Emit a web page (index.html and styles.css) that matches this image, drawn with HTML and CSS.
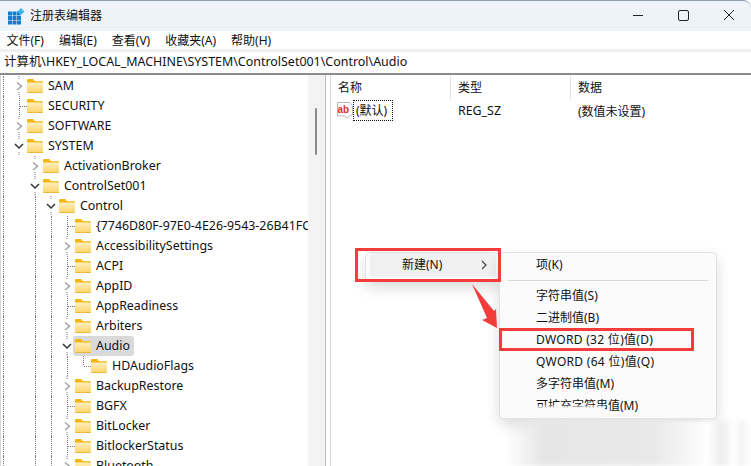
FILE: index.html
```html
<!DOCTYPE html>
<html lang="zh-CN">
<head>
<meta charset="utf-8">
<title>注册表编辑器</title>
<link rel="stylesheet" href="styles.css">
</head>
<body>
<svg class="defs" width="0" height="0" aria-hidden="true">
  <defs>
    <linearGradient id="fg" x1="0" y1="0" x2="0" y2="1"><stop offset="0" stop-color="#fff0bd"/><stop offset="1" stop-color="#fdd264"/></linearGradient>
    <symbol id="folder" viewBox="0 0 16 14">
      <path d="M0 1.5C0 .7.5 0 1.2 0H6l2 2.2h7c.6 0 1 .4 1 1V4H0z" fill="#f5b50d"/>
      <path d="M0 3.6h16v9.4c0 .6-.4 1-1 1H1c-.6 0-1-.4-1-1z" fill="url(#fg)"/>
      <path d="M0 13h16v.2c0 .5-.4.8-1 .8H1c-.6 0-1-.3-1-.8z" fill="#e9b743"/>
    </symbol>
    <symbol id="right" viewBox="0 0 16 20">
      <path d="M8 0v4M8 16v4" stroke="#777" stroke-dasharray="1 1" fill="none"/>
      <path d="M6 6.500l4.500 3.700L6 14" stroke="#a3a3a3" stroke-width="1.500" fill="none"/>
    </symbol>
    <symbol id="down" viewBox="0 0 16 20">
      <path d="M8 0v4M8 16v4" stroke="#777" stroke-dasharray="1 1" fill="none"/>
      <path d="M4 8l4 4 4-4" stroke="#333" stroke-width="1.500" fill="none"/>
    </symbol>
    <symbol id="leaf" viewBox="0 0 16 20">
      <path d="M8.500 0v20M9 10.500h7" stroke="#777" stroke-dasharray="1 1" fill="none"/>
    </symbol>
    <symbol id="last" viewBox="0 0 16 20">
      <path d="M8.500 0v10M9 10.500h7" stroke="#777" stroke-dasharray="1 1" fill="none"/>
    </symbol>
  </defs>
</svg>
<div class="window">
  <header class="titlebar">
    <svg class="appicon" width="17" height="17" viewBox="0 0 17 17">
      <path d="M0 3.500h4v4H0zM4.500 3.500h4v4h-4zM9 3.500h3.500v4H9zM0 8h4v4H0zM4.500 8h4v4h-4zM9 8h4v4H9zM0 12.500h4v4H0zM4.500 12.500h4v4h-4zM9 12.500h4v4H9z" fill="#0f7fd0"/>
      <path d="M13 0l3.500 3.500L13 7 9.500 3.500z" fill="#3fb6ea"/>
    </svg>
    <span class="title">注册表编辑器</span>
    <div class="controls">
      <svg width="12" height="12" viewBox="0 0 12 12"><path d="M0 5.500h10" stroke="#222" fill="none"/></svg>
      <svg width="12" height="12" viewBox="0 0 12 12"><rect x=".5" y=".5" width="10" height="10" rx="1.500" stroke="#222" fill="none"/></svg>
      <svg width="12" height="12" viewBox="0 0 12 12"><path d="M1 0l10 10M11 0L1 10" stroke="#222" fill="none"/></svg>
    </div>
  </header>
  <nav class="menubar">
    <span>文件(F)</span><span>编辑(E)</span><span>查看(V)</span><span>收藏夹(A)</span><span>帮助(H)</span>
  </nav>
  <div class="address">计算机\HKEY_LOCAL_MACHINE\SYSTEM\ControlSet001\Control\Audio</div>
  <main class="panes">
    <section class="tree">
      <div class="tree-scroll">
        <div class="row"><i class="g"></i><svg class="ex"><use href="#right"/></svg><svg class="fo"><use href="#folder"/></svg><span>SAM</span></div>
        <div class="row"><i class="g"></i><svg class="ex"><use href="#leaf"/></svg><svg class="fo"><use href="#folder"/></svg><span>SECURITY</span></div>
        <div class="row"><i class="g"></i><svg class="ex"><use href="#right"/></svg><svg class="fo"><use href="#folder"/></svg><span>SOFTWARE</span></div>
        <div class="row"><i class="g"></i><svg class="ex"><use href="#down"/></svg><svg class="fo"><use href="#folder"/></svg><span>SYSTEM</span></div>
        <div class="row"><i class="g"></i><i class="b"></i><svg class="ex"><use href="#right"/></svg><svg class="fo"><use href="#folder"/></svg><span>ActivationBroker</span></div>
        <div class="row"><i class="g"></i><i class="b"></i><svg class="ex"><use href="#down"/></svg><svg class="fo"><use href="#folder"/></svg><span>ControlSet001</span></div>
        <div class="row"><i class="g"></i><i class="b"></i><i class="g"></i><svg class="ex"><use href="#down"/></svg><svg class="fo"><use href="#folder"/></svg><span>Control</span></div>
        <div class="row"><i class="g"></i><i class="b"></i><i class="g"></i><i class="g"></i><svg class="ex"><use href="#leaf"/></svg><svg class="fo"><use href="#folder"/></svg><span>{7746D80F-97E0-4E26-9543-26B41FC22F79}</span></div>
        <div class="row"><i class="g"></i><i class="b"></i><i class="g"></i><i class="g"></i><svg class="ex"><use href="#right"/></svg><svg class="fo"><use href="#folder"/></svg><span>AccessibilitySettings</span></div>
        <div class="row"><i class="g"></i><i class="b"></i><i class="g"></i><i class="g"></i><svg class="ex"><use href="#leaf"/></svg><svg class="fo"><use href="#folder"/></svg><span>ACPI</span></div>
        <div class="row"><i class="g"></i><i class="b"></i><i class="g"></i><i class="g"></i><svg class="ex"><use href="#right"/></svg><svg class="fo"><use href="#folder"/></svg><span>AppID</span></div>
        <div class="row"><i class="g"></i><i class="b"></i><i class="g"></i><i class="g"></i><svg class="ex"><use href="#leaf"/></svg><svg class="fo"><use href="#folder"/></svg><span>AppReadiness</span></div>
        <div class="row"><i class="g"></i><i class="b"></i><i class="g"></i><i class="g"></i><svg class="ex"><use href="#right"/></svg><svg class="fo"><use href="#folder"/></svg><span>Arbiters</span></div>
        <div class="row"><i class="g"></i><i class="b"></i><i class="g"></i><i class="g"></i><svg class="ex"><use href="#down"/></svg><div class="sel"><svg class="fo"><use href="#folder"/></svg><span>Audio</span></div></div>
        <div class="row"><i class="g"></i><i class="b"></i><i class="g"></i><i class="g"></i><i class="g"></i><svg class="ex"><use href="#last"/></svg><svg class="fo"><use href="#folder"/></svg><span>HDAudioFlags</span></div>
        <div class="row"><i class="g"></i><i class="b"></i><i class="g"></i><i class="g"></i><svg class="ex"><use href="#right"/></svg><svg class="fo"><use href="#folder"/></svg><span>BackupRestore</span></div>
        <div class="row"><i class="g"></i><i class="b"></i><i class="g"></i><i class="g"></i><svg class="ex"><use href="#leaf"/></svg><svg class="fo"><use href="#folder"/></svg><span>BGFX</span></div>
        <div class="row"><i class="g"></i><i class="b"></i><i class="g"></i><i class="g"></i><svg class="ex"><use href="#right"/></svg><svg class="fo"><use href="#folder"/></svg><span>BitLocker</span></div>
        <div class="row"><i class="g"></i><i class="b"></i><i class="g"></i><i class="g"></i><svg class="ex"><use href="#leaf"/></svg><svg class="fo"><use href="#folder"/></svg><span>BitlockerStatus</span></div>
        <div class="row"><i class="g"></i><i class="b"></i><i class="g"></i><i class="g"></i><svg class="ex"><use href="#right"/></svg><svg class="fo"><use href="#folder"/></svg><span>Bluetooth</span></div>
      </div>
      <div class="scrollbar"><div class="thumb"></div></div>
    </section>
    <section class="list">
      <div class="list-head">
        <div class="col c1">名称</div><div class="col c2">类型</div><div class="col c3">数据</div>
      </div>
      <div class="list-row">
        <div class="c1 cell-name">
          <svg width="16" height="17" viewBox="0 0 16 17"><path d="M.5 .5h12l3 3v9l-3 1.500-2 2-3-2H.5z" fill="#fff" stroke="#b9b9b9"/><text x=".5" y="10.500" class="ab">ab</text></svg>
          <span class="focus">(默认)</span>
        </div>
        <div class="c2 latin shift">REG_SZ</div>
        <div class="c3 shift">(数值未设置)</div>
      </div>
    </section>
  </main>
</div>

<div class="menu main-menu">
  <div class="item hover"><span>新建(N)</span>
    <svg width="6" height="10" viewBox="0 0 6 10"><path d="M1 1l4 4-4 4" stroke="#444" stroke-width="1.200" fill="none"/></svg>
  </div>
</div>
<div class="menu sub-menu">
  <div class="sub">项(K)</div>
  <hr class="sep">
  <div class="sub">字符串值(S)</div>
  <div class="sub">二进制值(B)</div>
  <div class="sub wide">DWORD (32 位)值(D)</div>
  <div class="sub wide">QWORD (64 位)值(Q)</div>
  <div class="sub">多字符串值(M)</div>
  <div class="sub">可扩充字符串值(M)</div>
</div>
<div class="erase"></div>
<div class="smudge"></div>
<div class="mark mark-new"></div>
<div class="mark mark-dword"></div>
<svg class="arrow" width="30" height="48" viewBox="0 0 30 48"><path d="M1 1l22 27 2-2 1 19-15-8 5-2z" fill="#f33c3c"/></svg>
</body>
</html>
```

FILE: styles.css
```css
* { box-sizing: border-box; }
html, body { margin: 0; height: 100%; }
body {
  width: 751px; height: 466px; overflow: hidden; position: relative; background: #fff;
  font: 12px/1 "Noto Sans", "Noto Sans CJK SC", sans-serif; color: #111;
}
.defs { position: absolute; }
.window { height: 466px; display: flex; flex-direction: column; }
.titlebar {
  height: 31px; flex: none; display: flex; align-items: center; padding: 0 0 0 8px;
  background: #eef3f9; border-top: 1px solid #8d9dab; border-top-right-radius: 8px;
}
.appicon { margin-right: 5px; }
.title { font-size: 12px; }
.controls { margin-left: auto; display: flex; gap: 33px; margin-right: 16px; }
.menubar {
  height: 20px; margin-bottom: -2px; flex: none; display: flex; gap: 15px; padding-left: 6.5px; align-items: center;
}
.address {
  height: 26px; flex: none; display: flex; align-items: center; padding-left: 4px; font-size: 12.45px;
  border-top: 3px solid #f0f0f0; border-bottom: 2px solid #8b8b8f;
}
.panes { flex: 1; min-height: 0; display: flex; }
.tree { width: 326px; flex: none; display: flex; border-left: 1px solid #d8d8d8; border-right: 1px solid #bdbdbd; }
.tree-scroll { flex: 1; min-width: 0; overflow: hidden; padding: 1px 0 0 2px; font-size: 12.4px; }
.row { height: 20px; display: flex; align-items: center; white-space: nowrap; }
.g, .b { width: 16px; height: 20px; flex: none; }
.g { border-left: 1px dotted #777; }
.ex { width: 16px; height: 20px; flex: none; margin-left: -8px; }
.fo { width: 16px; height: 14px; flex: none; margin-right: 5px; }
.sel {
  display: flex; align-items: center; height: 20px; margin-left: -2px; padding: 0 4px 0 2px;
  background: #d9d9d9; border-radius: 3px;
}
.scrollbar { width: 17px; flex: none; background: #f3f3f3; padding-left: 7px; padding-top: 33px; }
.thumb { width: 2px; height: 47px; background: #8b8b8b; border-radius: 1px; }
.list { flex: 1; min-width: 0; border-left: 1px solid #d8d8d8; margin-left: 4px; }
.list-head { height: 25px; display: flex; align-items: center; }
.col { height: 25px; display: flex; align-items: center; border-right: 1px solid #e3e3e3; }
.c1 { width: 120px; padding-left: 7px; flex: none; }
.c2 { width: 120px; padding-left: 7px; flex: none; }
.c3 { flex: none; padding-left: 7px; }
.col.c3 { border-right: 0; }
.latin { font-size: 12.4px; }
.shift { padding-top: 2px; }
.list-row { height: 21px; display: flex; align-items: center; }
.cell-name { display: flex; align-items: center; padding-left: 6px; }
.focus { border: 1px dotted #111; width: 40px; height: 21px; display: flex; align-items: center; padding-left: 2px; }
.ab { font: bold 10px "Liberation Sans", sans-serif; fill: #d8342c; }

.menu {
  position: absolute; background: #fbfbfb; border: 1px solid #e2e2e2; border-radius: 5px;
  box-shadow: 0 6px 14px rgba(0,0,0,.14);
}
.main-menu { left: 365px; top: 252px; width: 135px; height: 30px; padding: 0 3px 2px 4px; }
.item {
  height: 24px; display: flex; align-items: center; justify-content: space-between;
  padding: 0 9px 0 32px; background: #f0f0f0; border-radius: 4px;
}
.sub-menu { left: 499px; top: 252px; width: 218px; height: 167px; padding-top: 1px; }
.sub { height: 22px; display: flex; align-items: center; padding-left: 36px; }
.wide { letter-spacing: .3px; }
.sep { height: 1px; margin: 4px 8px; border: 0; background: #d8d8d8; }
.erase {
  position: absolute; left: 530px; top: 404px; width: 75px; height: 10px;
  background: linear-gradient(to bottom, rgba(251,251,251,0) 0, #fbfbfb 45%);
}
.smudge {
  position: absolute; left: 505px; top: 421px; width: 246px; height: 45px;
  background: linear-gradient(to right, transparent 0, #e6e6e6 15%, #e9e9e9 60%, #f6f6f6 75%, #fff 82%, #ececec 88%, #fff 93%, #f2f2f2 96%, transparent 100%);
  filter: blur(2px);
}
.mark { position: absolute; border: 3px solid #f63b3b; }
.mark-new { left: 355px; top: 248px; width: 146px; height: 34px; }
.mark-dword { left: 499px; top: 328px; width: 195px; height: 23px; }
.arrow { position: absolute; left: 471px; top: 283px; }
```
